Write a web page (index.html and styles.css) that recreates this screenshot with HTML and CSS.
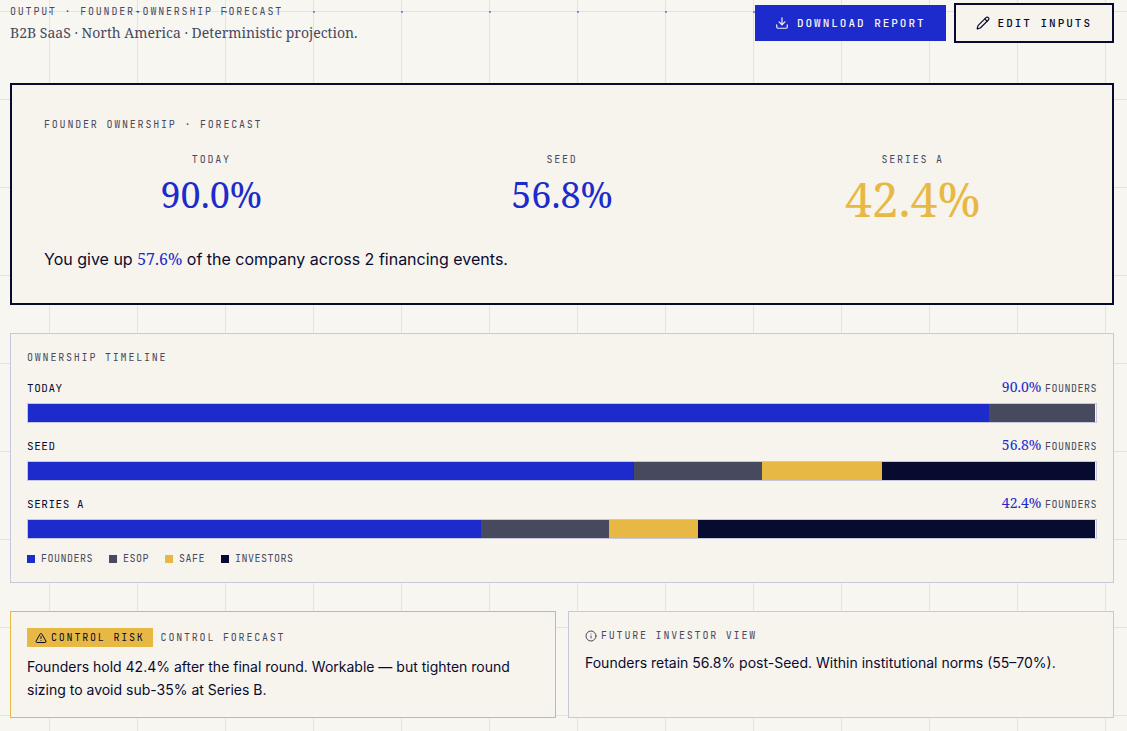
FILE: index.html
```html
<!DOCTYPE html>
<html lang="en">
<head>
  <meta charset="UTF-8">
  <meta name="viewport" content="width=device-width, initial-scale=1.0">
  <title>Founder Ownership Forecast</title>
  <link rel="stylesheet" href="styles.css">
</head>
<body>
  <main class="page">
    <header class="header">
      <div class="header-text">
        <h1 class="eyebrow">Output · Founder-Ownership Forecast</h1>
        <p class="subtitle">B2B SaaS · North America · Deterministic projection.</p>
      </div>
      <div class="actions">
        <button type="button" class="btn btn-primary">
          <svg class="btn-icon" viewBox="0 0 24 24"><path d="M12 3v12"/><path d="m7 10 5 5 5-5"/><path d="M21 15v4a2 2 0 0 1-2 2H5a2 2 0 0 1-2-2v-4"/></svg>
          Download Report
        </button>
        <button type="button" class="btn btn-outline">
          <svg class="btn-icon" viewBox="0 0 24 24"><path d="M21.174 6.812a1 1 0 0 0-3.986-3.987L3.842 16.174a2 2 0 0 0-.5.83l-1.321 4.352a.5.5 0 0 0 .623.622l4.353-1.32a2 2 0 0 0 .83-.497z"/><path d="m15 5 4 4"/></svg>
          Edit Inputs
        </button>
      </div>
    </header>

    <section class="summary">
      <h2 class="eyebrow">Founder Ownership · Forecast</h2>
      <div class="stats">
        <div class="stat">
          <div class="eyebrow">Today</div>
          <div class="stat-value">90.0%</div>
        </div>
        <div class="stat">
          <div class="eyebrow">Seed</div>
          <div class="stat-value">56.8%</div>
        </div>
        <div class="stat">
          <div class="eyebrow">Series A</div>
          <div class="stat-value final">42.4%</div>
        </div>
      </div>
      <p class="summary-text">You give up <span class="num">57.6%</span> of the company across 2 financing events.</p>
    </section>

    <section class="card timeline">
      <h2 class="eyebrow">Ownership Timeline</h2>
      <div class="round">
        <div class="round-head">
          <span class="round-name">Today</span>
          <span class="round-share"><span class="num">90.0%</span> <span class="unit">Founders</span></span>
        </div>
        <div class="bar">
          <div class="founders" style="width: 90%"></div>
          <div class="esop" style="width: 9.9%"></div>
        </div>
      </div>
      <div class="round">
        <div class="round-head">
          <span class="round-name">Seed</span>
          <span class="round-share"><span class="num">56.8%</span> <span class="unit">Founders</span></span>
        </div>
        <div class="bar">
          <div class="founders" style="width: 56.7%"></div>
          <div class="esop" style="width: 12%"></div>
          <div class="safe" style="width: 11.3%"></div>
          <div class="investors" style="width: 19.9%"></div>
        </div>
      </div>
      <div class="round">
        <div class="round-head">
          <span class="round-name">Series A</span>
          <span class="round-share"><span class="num">42.4%</span> <span class="unit">Founders</span></span>
        </div>
        <div class="bar">
          <div class="founders" style="width: 42.4%"></div>
          <div class="esop" style="width: 12%"></div>
          <div class="safe" style="width: 8.3%"></div>
          <div class="investors" style="width: 37.2%"></div>
        </div>
      </div>
      <ul class="legend">
        <li><span class="swatch founders"></span>Founders</li>
        <li><span class="swatch esop"></span>ESOP</li>
        <li><span class="swatch safe"></span>SAFE</li>
        <li><span class="swatch investors"></span>Investors</li>
      </ul>
    </section>

    <div class="notes">
      <section class="card note note-risk">
        <div class="note-head">
          <span class="badge">
            <svg class="note-icon" viewBox="0 0 24 24"><path d="m21.73 18-8-14a2 2 0 0 0-3.48 0l-8 14A2 2 0 0 0 4 21h16a2 2 0 0 0 1.73-3"/><path d="M12 9v4"/><path d="M12 17h.01"/></svg>
            Control Risk
          </span>
          <h2 class="eyebrow">Control Forecast</h2>
        </div>
        <p>Founders hold 42.4% after the final round. Workable — but tighten round sizing to avoid sub-35% at Series B.</p>
      </section>
      <section class="card note">
        <div class="note-head tight">
          <svg class="note-icon" viewBox="0 0 24 24"><circle cx="12" cy="12" r="10"/><path d="M12 16v-4"/><path d="M12 8h.01"/></svg>
          <h2 class="eyebrow">Future Investor View</h2>
        </div>
        <p>Founders retain 56.8% post-Seed. Within institutional norms (55–70%).</p>
      </section>
    </div>
  </main>
</body>
</html>
```

FILE: styles.css
```css
:root {
  --paper: #f7f6f1;
  --card: #f7f4ed;
  --ink: #080b30;
  --blue: #1d2bcc;
  --gold: #e8b844;
  --slate: #47495e;
  --line: #c8c8dc;
  --grid: #e3e2e8;
  --mono: "JetBrains Mono", "Liberation Mono", monospace;
  --serif: "Noto Serif", "Liberation Serif", serif;
}

* {
  box-sizing: border-box;
}

/* ruled paper with a small dot on every crossing */
body {
  margin: 0;
  min-height: 100vh;
  font-family: Inter, sans-serif;
  color: var(--ink);
  background-color: var(--paper);
  background-image:
    radial-gradient(circle at 1px 1px, rgba(29, 43, 204, 0.5) 1px, transparent 1px),
    linear-gradient(to right, var(--grid) 1px, transparent 1px),
    linear-gradient(to bottom, var(--grid) 1px, transparent 1px);
  background-size: 88px 88px;
  background-position: 49px 11px;
}

h1, h2, p, ul {
  margin: 0;
  padding: 0;
}

.page {
  padding: 3px 13px 13px 10px;
}

.header {
  display: flex;
  justify-content: space-between;
  align-items: center;
  margin-bottom: 40px;
}

.header-text {
  padding-top: 1px;
}

.eyebrow {
  font-family: var(--mono);
  font-size: 10px;
  font-weight: 400;
  line-height: 15px;
  letter-spacing: 0.18em;
  text-transform: uppercase;
  color: var(--slate);
}

.subtitle {
  margin-top: 4px;
  font-family: var(--serif);
  font-size: 14px;
  line-height: 20px;
  color: var(--slate);
}

.actions {
  display: flex;
  align-items: center;
  gap: 8px;
}

.btn {
  display: flex;
  align-items: center;
  gap: 8px;
  padding: 10px 20px;
  border: none;
  font-family: var(--mono);
  font-size: 11px;
  font-weight: 500;
  line-height: 16px;
  letter-spacing: 0.18em;
  text-transform: uppercase;
  cursor: pointer;
}

.btn-primary {
  background: var(--blue);
  color: var(--card);
}

.btn-outline {
  border: 2px solid var(--ink);
  background: var(--card);
  color: var(--ink);
}

svg {
  fill: none;
  stroke: currentColor;
  stroke-width: 2;
  stroke-linecap: round;
  stroke-linejoin: round;
  flex-shrink: 0;
}

.btn-icon {
  width: 14px;
  height: 14px;
}

.summary {
  padding: 32px;
  margin-bottom: 28px;
  border: 2px solid var(--ink);
  background: var(--card);
}

.stats {
  display: grid;
  grid-template-columns: repeat(3, 1fr);
  gap: 16px;
  margin: 20px 0 24px;
  text-align: center;
}

.stat-value {
  margin-top: 8px;
  font-family: var(--serif);
  font-size: 36px;
  line-height: 40px;
  color: var(--blue);
}

.stat-value.final {
  font-size: 48px;
  line-height: 48px;
  color: var(--gold);
}

.summary-text {
  font-size: 16px;
  line-height: 24px;
}

.num {
  font-family: var(--serif);
  color: var(--blue);
}

.card {
  padding: 16px;
  border: 1px solid var(--line);
  background: var(--card);
}

.timeline {
  margin-bottom: 28px;
}

.round {
  margin-top: 12px;
}

.round-head {
  display: flex;
  justify-content: space-between;
  align-items: baseline;
  height: 20px;
  margin-bottom: 6px;
  line-height: 20px;
}

.round-name {
  font-family: var(--mono);
  font-size: 11px;
  letter-spacing: 0.05em;
  text-transform: uppercase;
}

.round-share {
  font-family: var(--serif);
  font-size: 14px;
}

.unit {
  font-family: var(--mono);
  font-size: 10px;
  letter-spacing: 0.05em;
  text-transform: uppercase;
  color: var(--slate);
}

.bar {
  display: flex;
  height: 20px;
  border: 1px solid var(--line);
}

.founders {
  background: var(--blue);
}

.esop {
  background: var(--slate);
}

.safe {
  background: var(--gold);
}

.investors {
  background: var(--ink);
}

.legend {
  display: flex;
  gap: 16px;
  margin-top: 12px;
  list-style: none;
  font-family: var(--mono);
  font-size: 10px;
  line-height: 15px;
  letter-spacing: 0.05em;
  text-transform: uppercase;
  color: var(--slate);
}

.legend li {
  display: flex;
  align-items: center;
  gap: 6px;
}

.swatch {
  width: 8px;
  height: 8px;
}

.notes {
  display: grid;
  grid-template-columns: 1fr 1fr;
  gap: 12px;
}

.note-risk {
  border-color: var(--gold);
}

.note-head {
  display: flex;
  align-items: center;
  gap: 8px;
  margin-bottom: 8px;
  color: var(--slate);
}

.note-head.tight {
  gap: 4px;
}

.note-icon {
  width: 12px;
  height: 12px;
}

.note p {
  font-size: 14px;
  line-height: 23px;
}

.badge {
  display: flex;
  align-items: center;
  gap: 4px;
  padding: 2px 8px;
  background: var(--gold);
  font-family: var(--mono);
  font-size: 10px;
  line-height: 15px;
  letter-spacing: 0.18em;
  text-transform: uppercase;
  color: var(--ink);
}
```
